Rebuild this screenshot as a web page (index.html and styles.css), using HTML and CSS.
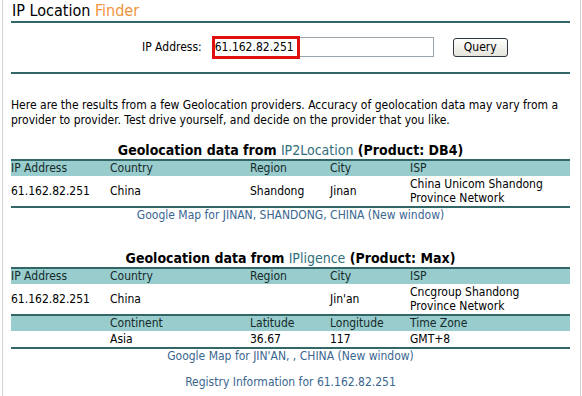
FILE: index.html
```html
<!DOCTYPE html>
<html lang="en">
<head>
  <meta charset="UTF-8" />
  <title>IP Location Finder</title>
  <link rel="stylesheet" href="styles.css">
</head>
<body>
  <div class="page">
    <h1 class="title">IP Location <span class="accent">Finder</span></h1>

    <form class="lookup">
      <label for="ip">IP Address:</label>
      <div class="field">
        <input id="ip" type="text" value="61.162.82.251">
        <span class="highlight"></span>
      </div>
      <button type="button" class="query-btn">Query</button>
    </form>

    <p class="intro">Here are the results from a few Geolocation providers. Accuracy of geolocation data may vary from a provider to provider. Test drive yourself, and decide on the provider that you like.</p>

    <!-- IP2Location -->
    <section class="provider">
      <h2>Geolocation data from <a href="#">IP2Location</a> (Product: DB4)</h2>
      <table class="geo">
        <colgroup>
          <col class="c1"><col class="c2"><col class="c3"><col class="c4"><col>
        </colgroup>
        <tr class="head">
          <th>IP Address</th><th>Country</th><th>Region</th><th>City</th><th>ISP</th>
        </tr>
        <tr>
          <td>61.162.82.251</td><td>China</td><td>Shandong</td><td>Jinan</td><td>China Unicom Shandong Province Network</td>
        </tr>
      </table>
      <a class="map-link" href="#">Google Map for JINAN, SHANDONG, CHINA (New window)</a>
    </section>

    <!-- IPligence -->
    <section class="provider second">
      <h2>Geolocation data from <a href="#">IPligence</a> (Product: Max)</h2>
      <table class="geo">
        <colgroup>
          <col class="c1"><col class="c2"><col class="c3"><col class="c4"><col>
        </colgroup>
        <tr class="head">
          <th>IP Address</th><th>Country</th><th>Region</th><th>City</th><th>ISP</th>
        </tr>
        <tr>
          <td>61.162.82.251</td><td>China</td><td></td><td>Jin'an</td><td>Cncgroup Shandong Province Network</td>
        </tr>
        <tr class="head">
          <th></th><th>Continent</th><th>Latitude</th><th>Longitude</th><th>Time Zone</th>
        </tr>
        <tr class="short">
          <td></td><td>Asia</td><td>36.67</td><td>117</td><td>GMT+8</td>
        </tr>
      </table>
      <a class="map-link" href="#">Google Map for JIN'AN, , CHINA (New window)</a>
    </section>

    <a class="map-link registry" href="#">Registry Information for 61.162.82.251</a>
  </div>
</body>
</html>
```

FILE: styles.css
```css
:root {
  --teal-dark: #336666;
  --teal-light: #99cccc;
  --link: #3a6690;
  --heading-link: #2f6f7c;
  --orange: #f0923a;
  --frame: #d2d2d2;
}

body {
  margin: 0;
  font-family: "DejaVu Sans Condensed", "DejaVu Sans", sans-serif;
  font-size: 12px;
  color: #000;
  background: #fff;
}

.page {
  margin: 0 1px 0 2px;
  padding: 0 10px 0 8px;
  border-left: 1px solid var(--frame);
  border-right: 1px solid var(--frame);
  min-height: 100vh;
  box-sizing: border-box;
}

.title {
  margin: 0;
  padding: 1px 0 0 1px;
  font-size: 16px;
  font-weight: normal;
  line-height: 20px;
  border-bottom: 2px solid var(--teal-dark);
}

.accent {
  color: var(--orange);
}

.lookup {
  display: flex;
  align-items: center;
  padding: 14px 0 15px 131px;
  margin: 0;
  border-bottom: 2px solid var(--teal-dark);
}

.lookup label {
  font-size: 12px;
  margin-right: 10px;
}

.field {
  position: relative;
}

.field input {
  display: block;
  width: 222px;
  height: 20px;
  box-sizing: border-box;
  border: 1px solid #9aa4ad;
  padding: 0 2px;
  font-family: inherit;
  font-size: 12px;
}

/* red annotation box over the address */
.highlight {
  position: absolute;
  left: 0;
  top: -1px;
  width: 88px;
  height: 23px;
  border: 3px solid #e01010;
  box-sizing: border-box;
  pointer-events: none;
}

.query-btn {
  margin-left: 19px;
  width: 55px;
  height: 19px;
  padding: 0;
  font-family: inherit;
  font-size: 12px;
  color: #000;
  border: 1px solid #2b3440;
  border-radius: 3px;
  background: linear-gradient(#ffffff, #e4e4dc);
}

.intro {
  margin: 24px 0 0;
  line-height: 15px;
}

.provider h2 {
  margin: 14px 0 1px;
  font-size: 14px;
  line-height: 16px;
  text-align: center;
}

.provider.second h2 {
  margin-top: 27px;
}

.provider h2 a {
  color: var(--heading-link);
  font-weight: normal;
  text-decoration: none;
}

.geo {
  width: 100%;
  border-collapse: collapse;
  table-layout: fixed;
  border-bottom: 2px solid var(--teal-dark);
}

.geo .c1 { width: 99px; }
.geo .c2 { width: 140px; }
.geo .c3 { width: 80px; }
.geo .c4 { width: 80px; }

.geo th {
  background: var(--teal-light);
  border-top: 2px solid var(--teal-dark);
  font-weight: normal;
  text-align: left;
  color: #142a2a;
  padding: 0;
  line-height: 15px;
}

.geo td {
  padding: 1px 8px 1px 0;
  line-height: 14px;
  vertical-align: middle;
}

.map-link {
  display: block;
  text-align: center;
  line-height: 15px;
  color: var(--link);
  text-decoration: none;
}

.registry {
  margin-top: 11px;
}
```
